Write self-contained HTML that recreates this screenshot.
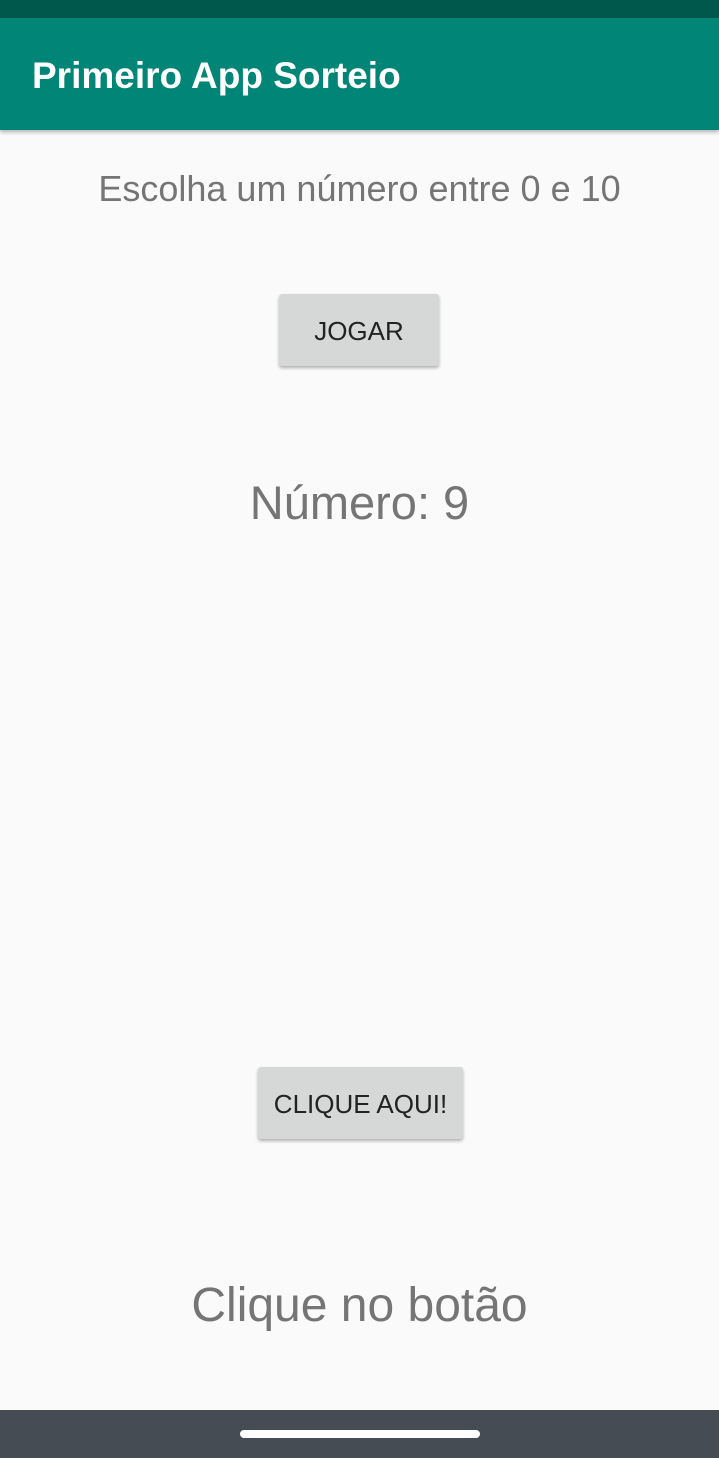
<!DOCTYPE html>
<html><head><style>
body{margin:0;width:719px;height:1458px;background:#fafafa;font-family:"Liberation Sans",sans-serif;position:relative;overflow:hidden}
.status{position:absolute;top:0;left:0;width:719px;height:18px;background:#00574b}
.bar{position:absolute;top:18px;left:0;width:719px;height:112px;background:#008577;box-shadow:0 2px 4px rgba(0,0,0,.3)}
.bar span{position:absolute;left:32px;top:37px;color:#fff;font-size:37px;font-weight:bold}
.t{position:absolute;left:0;width:719px;text-align:center;color:#757575}
.btn{position:absolute;background:#d6d7d7;box-shadow:0 2px 3px rgba(0,0,0,.3);border-radius:3px;color:#222;font-size:26px;text-align:center;line-height:75px}
.nav{position:absolute;top:1410px;left:0;width:719px;height:48px;background:#464c53}
.nav div{position:absolute;left:240px;top:20px;width:240px;height:8px;border-radius:4px;background:#fff}
</style></head><body>
<div class="status"></div>
<div class="bar"><span>Primeiro App Sorteio</span></div>
<div class="t" style="top:168px;font-size:36px">Escolha um número entre 0 e 10</div>
<div class="btn" style="left:279px;top:294px;width:160px;height:72px">JOGAR</div>
<div class="t" style="top:475px;font-size:47px">Número: 9</div>
<div class="btn" style="left:258px;top:1067px;width:205px;height:72px">CLIQUE AQUI!</div>
<div class="t" style="top:1278px;font-size:48px">Clique no botão</div>
<div class="nav"><div></div></div>
</body></html>
